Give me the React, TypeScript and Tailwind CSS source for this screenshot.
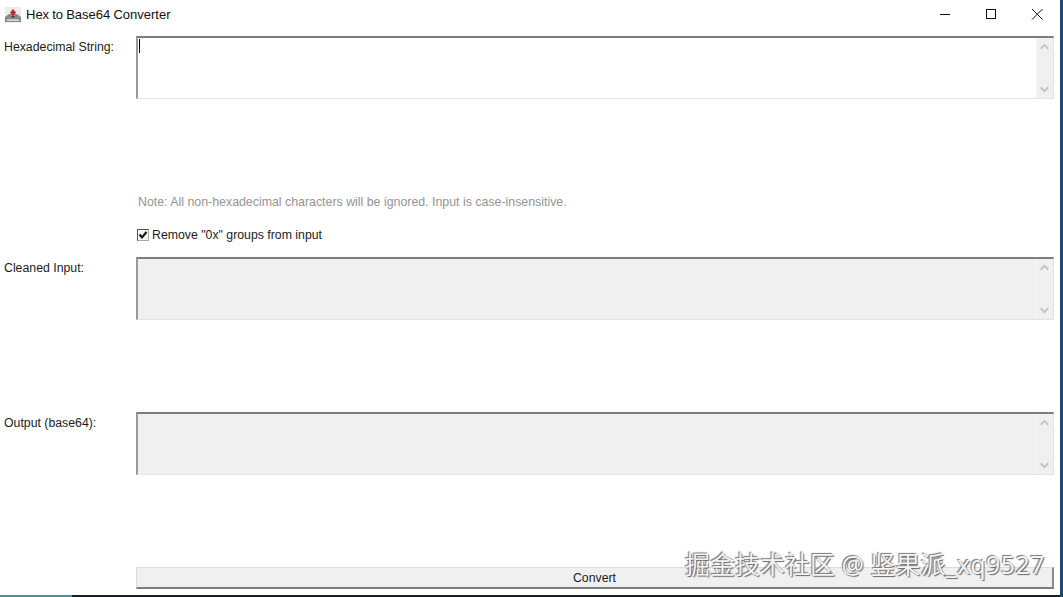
function ScrollArrow({ up }: { up?: boolean }) {
  return (
    <svg width="9" height="7" viewBox="0 0 9 7" fill="none" stroke="#c4c4c4" strokeWidth="2">
      <path d={up ? "M.7 5.7 4.5 1.9 8.3 5.7" : "M.7 1.3 4.5 5.1 8.3 1.3"} />
    </svg>
  );
}

function TextBox({ disabled, caret }: { disabled?: boolean; caret?: boolean }) {
  return (
    <div
      className={`flex h-[63px] border-t-2 border-l-2 border-r border-b border-t-[#7d7d7d] border-l-[#9a9a9a] border-r-[#e3e3e3] border-b-[#e3e3e3] ${
        disabled ? "bg-[#f0f0f0]" : "bg-white"
      }`}
    >
      <div className="flex-1 pl-[1px] pt-[1px]">
        {caret && <div className="h-[14px] w-[1px] bg-black" />}
      </div>
      <div className="flex w-[17px] flex-col items-center justify-between border-l border-[#f7f7f7] bg-[#f0f0f0] pb-[5px] pr-[1px] pt-[5px]">
        <ScrollArrow up />
        <ScrollArrow />
      </div>
    </div>
  );
}

export default function App() {
  return (
    <div className="relative flex h-[597px] w-[1063px] flex-col overflow-hidden bg-[#14202c] font-['Liberation_Sans',sans-serif] text-[12.3px] text-[#1c1c1c]">
      {/* Window */}
      <div className="flex h-[595px] w-[1060px] flex-col bg-white">
        {/* Title bar */}
        <div className="flex h-[30px] items-center pl-[5px]">
          <svg width="16" height="16" viewBox="0 0 16 16">
            <rect x="0" y="0" width="16" height="16" fill="#ececec" />
            <path d="M0 15V10l4-3h8l4 3v5z" fill="#8b8b8b" />
            <path d="M2 12.5h12v1.2H2z" fill="#f6f6f6" />
            <path d="M8 2 11 5.5 8 9 5 5.5z" fill="#c4272c" />
            <path d="M6.5 9h3v1.5h-3z" fill="#2f3a4e" />
          </svg>
          <span className="ml-[5px] text-[13px] text-[#111] [word-spacing:-0.5px]">Hex to Base64 Converter</span>
          <div className="ml-auto flex h-full items-center">
            <svg width="46" height="30" viewBox="0 0 46 30" fill="none" stroke="#111" strokeWidth="1">
              <path d="M18 14.5h10" />
            </svg>
            <svg width="46" height="30" viewBox="0 0 46 30" fill="none" stroke="#111" strokeWidth="1">
              <rect x="18.5" y="9.5" width="9" height="9" />
            </svg>
            <svg width="46" height="30" viewBox="0 0 46 30" fill="none" stroke="#111" strokeWidth="1">
              <path d="M18 9l10.5 10.5M28.5 9 18 19.5" />
            </svg>
          </div>
        </div>

        {/* Form */}
        <div className="grid flex-1 grid-cols-[136px_918px] content-start pt-[6px]">
          <label className="pl-[4px] pt-[2px]">Hexadecimal String:</label>
          <TextBox caret />

          <div />
          <div className="pl-[2px] pt-[94px] text-[12.37px] leading-[18px] text-[#949494]">
            Note: All non-hexadecimal characters will be ignored. Input is case-insensitive.
          </div>

          <div />
          <div className="mt-[16px] flex h-[15px] items-center pl-[1px]">
            <span className="flex h-[12px] w-[12px] items-center justify-center border-t border-l border-r border-b border-t-[#555] border-l-[#555] border-r-[#a8a8a8] border-b-[#a8a8a8] bg-[#f4f4f4]">
              <svg width="10" height="10" viewBox="0 0 10 10" fill="none" stroke="#111" strokeWidth="2">
                <path d="M1.5 4.5 4 7.5 8.5 2" />
              </svg>
            </span>
            <span className="ml-[3px] pt-[1px]">Remove "0x" groups from input</span>
          </div>

          <label className="mt-[15px] pl-[4px] pt-[2px]">Cleaned Input:</label>
          <div className="mt-[15px]">
            <TextBox disabled />
          </div>

          <label className="mt-[92px] pl-[4px] pt-[2px]">Output (base64):</label>
          <div className="mt-[92px]">
            <TextBox disabled />
          </div>

          <div />
          <button className="mt-[92px] h-[22px] border-t border-l border-r-2 border-b-2 border-t-[#dcdcdc] border-l-[#dcdcdc] border-r-[#8a8a8a] border-b-[#7d7d7d] bg-[#f0f0f0] text-center leading-[20px]">
            Convert
          </button>
        </div>
      </div>

      {/* Desktop showing below the window */}
      <div className="absolute bottom-0 left-0 h-[2px] w-[72px] bg-[#4d8f95]" />
      <div className="absolute right-0 top-0 h-[597px] w-[3px] bg-[#1d4a70]" />

      {/* Watermark */}
      <div className="absolute left-[685px] top-[547px] whitespace-nowrap font-['Noto_Sans','Noto_Sans_CJK_SC',sans-serif] text-[25px] leading-[34px] text-[#f4f4f4] [text-shadow:1px_1px_1px_#666,-1px_-1px_1px_#777]">
        掘金技术社区 @ 竖果派<span className="tracking-[0.45px]">_xq9527</span>
      </div>
    </div>
  );
}
